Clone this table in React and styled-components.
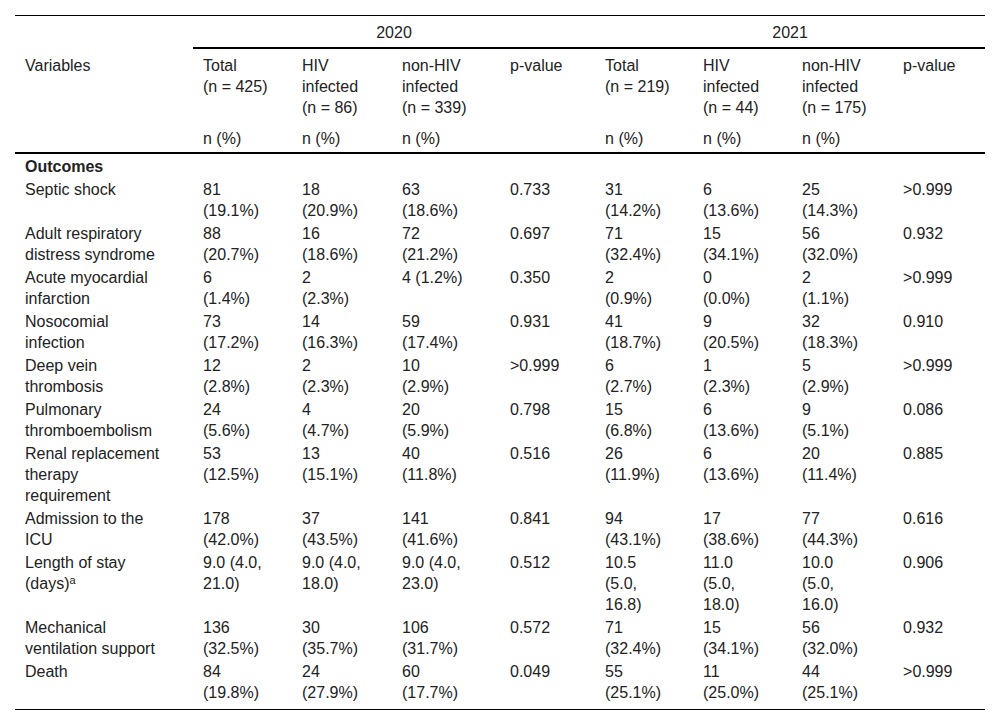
import React from 'react';
import styled, { createGlobalStyle } from 'styled-components';

const GlobalStyle = createGlobalStyle`
  * { box-sizing: border-box; }
  body { margin: 0; background: #fff; }
`;

const Page = styled.div`
  padding: 15px;
  font-family: "Liberation Sans", Arial, sans-serif;
  font-size: 16px;
  line-height: 21px;
  color: #222;
`;

const Table = styled.table`
  width: 970px;
  table-layout: fixed;
  border-collapse: separate;
  border-spacing: 0;
`;

const YearCell = styled.th`
  font-weight: normal;
  text-align: center;
  padding: 6px 0 4px;
  border-top: 1px solid #000;
  border-bottom: ${p => (p.$year ? '2px solid #000' : 'none')};
`;

const HeadCell = styled.th`
  font-weight: normal;
  text-align: left;
  vertical-align: top;
  padding: ${p => (p.$unit ? '5px' : '6px')} ${p => p.$pr}px ${p => (p.$unit ? '3px' : '5px')} 10px;
  border-bottom: ${p => (p.$unit ? '2px solid #000' : 'none')};
`;

const Cell = styled.td`
  text-align: left;
  vertical-align: top;
  padding: 1px ${p => p.$pr}px ${p => (p.$last ? '6px' : '1px')} 10px;
  border-bottom: ${p => (p.$last ? '1px solid #000' : 'none')};
`;

const GroupCell = styled.td`
  font-weight: bold;
  padding: 2px 10px 1px;
`;

const Sup = styled.sup`
  font-size: 11px;
  line-height: 0;
  vertical-align: 5px;
`;

// column widths and right padding (controls where values wrap)
const COLS = [
  { w: 178, pr: 26 },
  { w: 99, pr: 29.5 },
  { w: 100, pr: 30.5 },
  { w: 108, pr: 33 },
  { w: 95, pr: 25 },
  { w: 98, pr: 28.5 },
  { w: 99, pr: 29.5 },
  { w: 101, pr: 31.5 },
  { w: 92, pr: 22 },
];

const NB = '\u00a0';

const SUBHEAD = [
  `Total (n${NB}=${NB}425)`,
  `HIV infected (n${NB}=${NB}86)`,
  `non-HIV infected (n${NB}=${NB}339)`,
  'p-value',
  `Total (n${NB}=${NB}219)`,
  `HIV infected (n${NB}=${NB}44)`,
  `non-HIV infected (n${NB}=${NB}175)`,
  'p-value',
];

const UNITS = ['n (%)', 'n (%)', 'n (%)', '', 'n (%)', 'n (%)', 'n (%)', ''];

const ROWS = [
  ['Septic shock', '81 (19.1%)', '18 (20.9%)', '63 (18.6%)', '0.733', '31 (14.2%)', '6 (13.6%)', '25 (14.3%)', '>0.999'],
  ['Adult respiratory distress syndrome', '88 (20.7%)', '16 (18.6%)', '72 (21.2%)', '0.697', '71 (32.4%)', '15 (34.1%)', '56 (32.0%)', '0.932'],
  ['Acute myocardial infarction', '6 (1.4%)', '2 (2.3%)', '4 (1.2%)', '0.350', '2 (0.9%)', '0 (0.0%)', '2 (1.1%)', '>0.999'],
  ['Nosocomial infection', '73 (17.2%)', '14 (16.3%)', '59 (17.4%)', '0.931', '41 (18.7%)', '9 (20.5%)', '32 (18.3%)', '0.910'],
  ['Deep vein thrombosis', '12 (2.8%)', '2 (2.3%)', '10 (2.9%)', '>0.999', '6 (2.7%)', '1 (2.3%)', '5 (2.9%)', '>0.999'],
  ['Pulmonary thromboembolism', '24 (5.6%)', '4 (4.7%)', '20 (5.9%)', '0.798', '15 (6.8%)', '6 (13.6%)', '9 (5.1%)', '0.086'],
  ['Renal replacement therapy requirement', '53 (12.5%)', '13 (15.1%)', '40 (11.8%)', '0.516', '26 (11.9%)', '6 (13.6%)', '20 (11.4%)', '0.885'],
  ['Admission to the ICU', '178 (42.0%)', '37 (43.5%)', '141 (41.6%)', '0.841', '94 (43.1%)', '17 (38.6%)', '77 (44.3%)', '0.616'],
  [<>Length of stay (days)<Sup>a</Sup></>, '9.0 (4.0, 21.0)', '9.0 (4.0, 18.0)', '9.0 (4.0, 23.0)', '0.512', '10.5 (5.0, 16.8)', '11.0 (5.0, 18.0)', '10.0 (5.0, 16.0)', '0.906'],
  ['Mechanical ventilation support', '136 (32.5%)', '30 (35.7%)', '106 (31.7%)', '0.572', '71 (32.4%)', '15 (34.1%)', '56 (32.0%)', '0.932'],
  ['Death', '84 (19.8%)', '24 (27.9%)', '60 (17.7%)', '0.049', '55 (25.1%)', '11 (25.0%)', '44 (25.1%)', '>0.999'],
];

export default function App() {
  return (
    <>
      <GlobalStyle />
      <Page>
        <Table>
          <colgroup>
            {COLS.map((c, i) => (
              <col key={i} style={{ width: c.w }} />
            ))}
          </colgroup>
          <thead>
            <tr>
              <YearCell />
              <YearCell $year colSpan={4}>2020</YearCell>
              <YearCell $year colSpan={4}>2021</YearCell>
            </tr>
            <tr>
              <HeadCell $pr={COLS[0].pr}>Variables</HeadCell>
              {SUBHEAD.map((t, i) => (
                <HeadCell key={i} $pr={COLS[i + 1].pr}>{t}</HeadCell>
              ))}
            </tr>
            <tr>
              <HeadCell $unit $pr={COLS[0].pr} />
              {UNITS.map((t, i) => (
                <HeadCell key={i} $unit $pr={COLS[i + 1].pr}>{t}</HeadCell>
              ))}
            </tr>
          </thead>
          <tbody>
            <tr>
              <GroupCell colSpan={9}>Outcomes</GroupCell>
            </tr>
            {ROWS.map((row, r) => (
              <tr key={r}>
                {row.map((v, i) => (
                  <Cell key={i} $pr={COLS[i].pr} $last={r === ROWS.length - 1}>{v}</Cell>
                ))}
              </tr>
            ))}
          </tbody>
        </Table>
      </Page>
    </>
  );
}
